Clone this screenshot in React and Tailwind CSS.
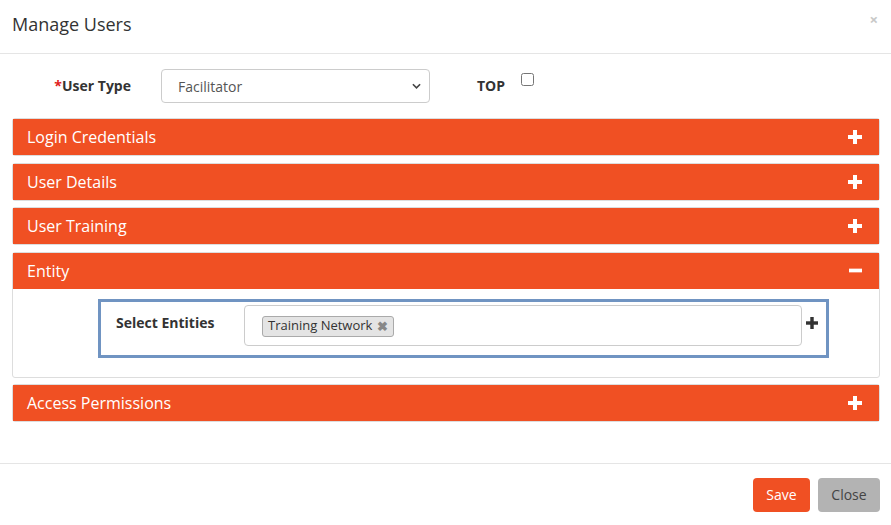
import React, { useState } from 'react';

function PlusIcon({ className }) {
  return (
    <svg viewBox="0 0 14 14" className={className} fill="currentColor">
      <rect x="5" y="0" width="4" height="14" />
      <rect x="0" y="5" width="14" height="4" />
    </svg>
  );
}

function MinusIcon({ className }) {
  return (
    <svg viewBox="0 0 14 14" className={className} fill="currentColor">
      <rect x="0" y="5" width="14" height="4" />
    </svg>
  );
}

function Panel({ title, open, children }) {
  return (
    <div className="border border-[#dddddd] rounded-[3px] bg-white">
      <div className="h-[36px] bg-[#f05023] flex items-center justify-between pl-[14px] pr-[17px] text-white text-[16px]">
        <span>{title}</span>
        {open ? <MinusIcon className="w-[13px] h-[13px]" /> : <PlusIcon className="w-[14px] h-[14px]" />}
      </div>
      {open && children}
    </div>
  );
}

export default function App() {
  const [top, setTop] = useState(false);

  return (
    <div className="w-[891px] h-[525px] bg-white text-[#333] flex flex-col" style={{ fontFamily: '"Open Sans", sans-serif' }}>
      {/* header */}
      <div className="h-[54px] border-b border-[#e5e5e5] flex items-center justify-between pl-[12px] pr-[13px] shrink-0">
        <h4 className="text-[18px] text-[#333] pb-[4px]">Manage Users</h4>
        <span className="text-[#c8c8c8] text-[15px] font-bold pb-[14px]">×</span>
      </div>

      {/* body */}
      <div className="flex-1 pl-[12px] pr-[11px]">
        <div className="flex items-center h-[34px] mt-[15px]">
          <label className="w-[119px] text-right text-[14px] font-bold text-[#333] pb-[2px]">
            <span className="text-[#e02020]">*</span>User Type
          </label>
          <div className="ml-[30px] w-[269px] h-[34px] border border-[#cccccc] rounded-[4px] flex items-center justify-between pl-[16px] pr-[8px] text-[14px] text-[#555]">
            <span>Facilitator</span>
            <svg viewBox="0 0 10 6" className="w-[9px] h-[6px]" fill="none" stroke="#444" strokeWidth="1.8">
              <path d="M1 1l4 4 4-4" />
            </svg>
          </div>
          <label className="ml-[47px] text-[14px] font-bold text-[#333] pb-[1px]">TOP</label>
          <input
            type="checkbox"
            checked={top}
            onChange={() => setTop(!top)}
            className="ml-[16px] w-[13px] h-[13px] self-start mt-[4px]"
          />
        </div>

        <div className="mt-[15px] flex flex-col gap-[6.5px]">
          <Panel title="Login Credentials" />
          <Panel title="User Details" />
          <Panel title="User Training" />
          <Panel title="Entity" open>
            <div className="pt-[10px] pb-[19px] pl-[85px] pr-[50px]">
              <div className="border-[3px] border-[#7094c2] h-[59px] flex items-start pl-[15px] pr-[8px] pt-[3px]">
                <label className="w-[128px] text-[14px] font-bold text-[#333] pt-[7px]">Select Entities</label>
                <div className="w-[558px] h-[41px] border border-[#cccccc] rounded-[4px] flex items-start pt-[10px] pl-[17px]">
                  <span className="flex items-center gap-[5px] h-[21px] px-[5px] bg-[#e4e4e4] border border-[#aaaaaa] rounded-[3px] text-[13px] text-[#333]">
                    Training Network
                    <span className="text-[#888] font-bold text-[13px] leading-none">✖</span>
                  </span>
                </div>
                <PlusIcon className="w-[12px] h-[12px] ml-[4px] mt-[12px] text-[#333]" />
              </div>
            </div>
          </Panel>
          <Panel title="Access Permissions" />
        </div>
      </div>

      {/* footer */}
      <div className="h-[62px] border-t border-[#e5e5e5] flex items-center justify-end gap-[8px] pr-[11px] shrink-0">
        <button className="h-[34px] w-[57px] bg-[#f05023] text-white text-[14px] rounded-[4px]">Save</button>
        <button className="h-[34px] w-[62px] bg-[#b3b3b3] text-[#444] text-[14px] rounded-[4px]">Close</button>
      </div>
    </div>
  );
}
